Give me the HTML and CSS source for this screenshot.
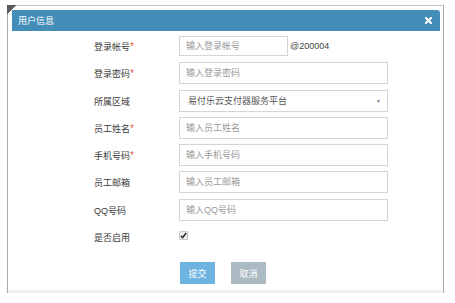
FILE: index.html
```html
<!DOCTYPE html>
<html lang="zh-CN">
<head>
    <meta charset="UTF-8">
    <meta name="viewport" content="width=device-width, initial-scale=1.0">
    <title>用户信息</title>
    <link rel="stylesheet" href="styles.css">
</head>
<body>
    <div class="dialog">
        <span class="corner-handle"></span>
        <div class="dialog-header">
            <span class="dialog-title">用户信息</span>
            <svg class="close-icon" width="7" height="7" viewBox="0 0 7 7">
                <path d="M1 1 L6 6 M6 1 L1 6" stroke="#fff" stroke-width="2" stroke-linecap="square"/>
            </svg>
        </div>

        <form class="user-form">
            <div class="form-row">
                <label class="form-label">登录帐号<span class="required">*</span></label>
                <div class="form-control inline">
                    <input class="text-input short" type="text" placeholder="输入登录帐号">
                    <span class="suffix">@200004</span>
                </div>
            </div>
            <div class="form-row">
                <label class="form-label">登录密码<span class="required">*</span></label>
                <div class="form-control">
                    <input class="text-input" type="text" placeholder="输入登录密码">
                </div>
            </div>
            <div class="form-row">
                <label class="form-label">所属区域</label>
                <div class="form-control">
                    <div class="select-box">
                        <span>易付乐云支付器服务平台</span>
                        <span class="select-arrow">▼</span>
                    </div>
                </div>
            </div>
            <div class="form-row">
                <label class="form-label">员工姓名<span class="required">*</span></label>
                <div class="form-control">
                    <input class="text-input" type="text" placeholder="输入员工姓名">
                </div>
            </div>
            <div class="form-row">
                <label class="form-label">手机号码<span class="required">*</span></label>
                <div class="form-control">
                    <input class="text-input" type="text" placeholder="输入手机号码">
                </div>
            </div>
            <div class="form-row">
                <label class="form-label">员工邮箱</label>
                <div class="form-control">
                    <input class="text-input" type="text" placeholder="输入员工邮箱">
                </div>
            </div>
            <div class="form-row">
                <label class="form-label">QQ号码</label>
                <div class="form-control">
                    <input class="text-input" type="text" placeholder="输入QQ号码">
                </div>
            </div>
            <div class="form-row">
                <label class="form-label">是否启用</label>
                <div class="form-control">
                    <span class="checkbox">
                        <svg width="7" height="7" viewBox="0 0 7 7">
                            <path d="M0.8 3.8 L2.6 5.6 L6.2 1" stroke="#333" stroke-width="1.6" fill="none"/>
                        </svg>
                    </span>
                </div>
            </div>

            <div class="form-actions">
                <button type="button" class="btn btn-submit">提交</button>
                <button type="button" class="btn btn-cancel">取消</button>
            </div>
        </form>

        <div class="dialog-footer"></div>
    </div>
</body>
</html>
```

FILE: styles.css
```css
body {
    margin: 0;
    width: 455px;
    height: 303px;
    background: #fff;
    font-family: "Liberation Sans", "Noto Sans CJK SC", sans-serif;
    font-size: 9px;
    color: #393939;
    overflow: hidden;
}
.dialog {
    position: relative;
    box-sizing: border-box;
    width: 437px;
    height: 288px;
    margin: 5px 0 0 7px;
    padding: 4px 3px 0 4px;
    border: 1px solid #a9a9a9;
    border-top-color: #c4c4c4;
    border-bottom: none;
    display: flex;
    flex-direction: column;
}
.corner-handle {
    position: absolute;
    left: -1px;
    top: -1px;
    width: 9px;
    height: 9px;
    background: linear-gradient(135deg, #5a5a5a 0 50%, transparent 50%);
    border-bottom-right-radius: 6px;
}
.dialog-header {
    height: 21px;
    background: #438eb9;
    border-top-right-radius: 3px;
    display: flex;
    align-items: center;
    justify-content: space-between;
    padding: 0 8px 0 6px;
    flex-shrink: 0;
}
.dialog-title {
    color: #fff;
    font-size: 9px;
}
.close-icon {
    display: block;
}
.user-form {
    display: flex;
    flex-direction: column;
    gap: 5.3px;
    padding: 4px 0 0 82px;
}
.form-row {
    display: grid;
    grid-template-columns: 85px 1fr;
    height: 22px;
    align-items: center;
}
.form-label {
    padding-top: 1px;
}
.required {
    color: #dd5a43;
    font-size: 10px;
}
.form-control.inline {
    display: flex;
    align-items: center;
    gap: 2px;
}
.text-input {
    box-sizing: border-box;
    width: 209px;
    height: 22px;
    margin: 0;
    padding: 0 6px;
    border: 1px solid #d5d5d5;
    font-family: "Liberation Sans", "Noto Sans CJK SC", sans-serif;
    font-size: 9px;
    color: #555;
    outline: none;
}
.text-input.short {
    width: 109px;
    height: 20px;
}
.text-input::placeholder {
    color: #999;
}
.suffix {
    color: #444;
}
.select-box {
    box-sizing: border-box;
    width: 209px;
    height: 22px;
    border: 1px solid #d5d5d5;
    display: flex;
    align-items: center;
    justify-content: space-between;
    padding: 0 6px 0 8px;
    color: #555;
}
.select-arrow {
    font-size: 5px;
    color: #777;
}
.checkbox {
    box-sizing: border-box;
    width: 9px;
    height: 9px;
    margin-top: -3px;
    border: 1px solid #c8c8c8;
    background: #eee;
    border-radius: 1px;
    display: flex;
    align-items: center;
    justify-content: center;
}
.form-actions {
    display: flex;
    gap: 16px;
    margin-top: 8.7px;
    padding-left: 86px;
}
.btn {
    width: 35px;
    height: 22px;
    border: none;
    padding: 0;
    color: #fff;
    font-family: "Liberation Sans", "Noto Sans CJK SC", sans-serif;
    font-size: 9px;
    cursor: pointer;
}
.btn-submit {
    background: #6fb3e0;
}
.btn-cancel {
    background: #abbac3;
}
.dialog-footer {
    margin: auto -3px 0 -4px;
    height: 3px;
    background: #eff1f3;
}
```
